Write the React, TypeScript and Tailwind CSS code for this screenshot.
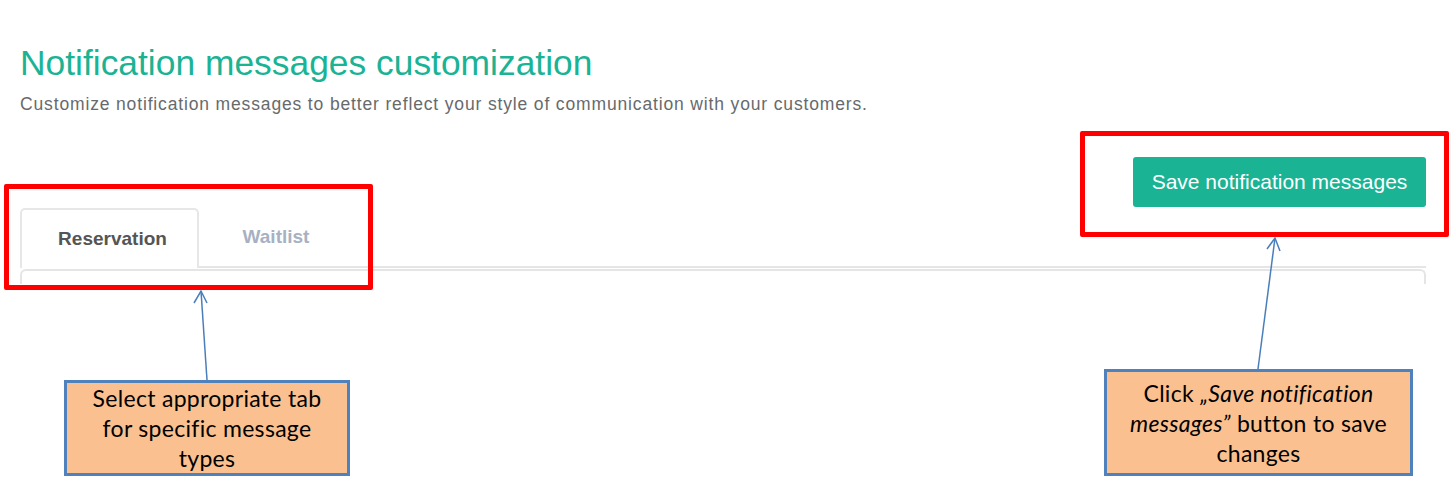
import React from "react";

const Callout = ({ className, children }: { className: string; children: React.ReactNode }) => (
  <div
    className={`absolute flex items-center justify-center border-[3px] border-[#4f81bd] bg-[#fac090]
      text-center font-['Lato',sans-serif] text-[23px] leading-[30px] tracking-[0.3px] text-black ${className}`}
  >
    <div>{children}</div>
  </div>
);

export default function App() {
  return (
    <div className="relative h-[489px] w-[1450px] overflow-hidden bg-white font-['Liberation_Sans',Arial,sans-serif]">
      <div className="pr-[24px] pl-[20px]">
        <h1 className="mt-[45px] text-[35.4px] leading-[36px] font-normal text-[#1ab394]">
          Notification messages customization
        </h1>
        <p className="mt-[12px] text-[17.5px] leading-[22px] tracking-[0.85px] text-[#676a6c]">
          Customize notification messages to better reflect your style of communication with your
          customers.
        </p>

        <div className="mt-[42px] flex justify-end">
          <button
            type="button"
            className="h-[50px] w-[293px] rounded-[3px] bg-[#1ab394] text-[21px] text-white"
          >
            Save notification messages
          </button>
        </div>

        {/* tabs */}
        <div className="mt-[1px] flex border-b-2 border-[#e5e5e5]">
          <div
            className="-mb-[2px] flex h-[60px] w-[179px] items-center justify-center rounded-t-[5px]
              border-2 border-b-0 border-[#e7e7e7] bg-white pt-[1px] pl-[6px] text-[19px] font-bold text-[#555]"
          >
            Reservation
          </div>
          <div className="flex h-[58px] w-[154px] items-center justify-center pt-[1px] text-[19px] font-bold text-[#a7b1c2]">
            Waitlist
          </div>
        </div>
        <div className="mt-[1px] h-[15px] rounded-t-[6px] border-2 border-b-0 border-[#e5e5e5]" />
      </div>

      {/* annotation boxes */}
      <div className="absolute top-[184px] left-[4px] h-[106px] w-[369px] rounded-[2px] border-[5px] border-[#ff0000]" />
      <div className="absolute top-[131px] left-[1080px] h-[106px] w-[369px] rounded-[2px] border-[5px] border-[#ff0000]" />

      <svg className="absolute inset-0" width="1450" height="489" fill="none" stroke="#4a7ebb" strokeWidth="1.5">
        <line x1="207" y1="380" x2="201" y2="291" />
        <polyline points="194,303 201,291 207,303" />
        <line x1="1258" y1="369" x2="1275" y2="238" />
        <polyline points="1267,249 1275,238 1280,251" />
      </svg>

      <Callout className="top-[380px] left-[64px] h-[96px] w-[286px]">
        Select appropriate tab
        <br />
        for specific message
        <br />
        types
      </Callout>
      <Callout className="top-[369px] left-[1104px] h-[107px] w-[309px]">
        Click <i>„Save notification</i>
        <br />
        <i>messages”</i> button to save
        <br />
        changes
      </Callout>
    </div>
  );
}
